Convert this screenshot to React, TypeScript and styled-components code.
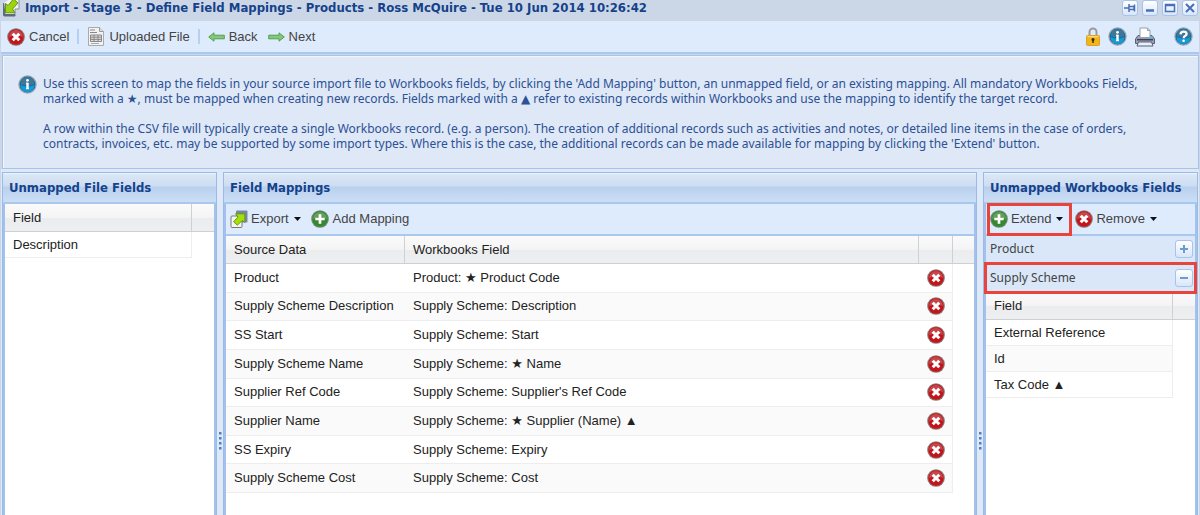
import React from "react";
import styled, { createGlobalStyle, css } from "styled-components";

const heading = `"DejaVu Sans Condensed", "DejaVu Sans", sans-serif`;
const prose = `"Noto Sans", "DejaVu Sans", sans-serif`;
const arial = `"Liberation Sans", "DejaVu Sans", sans-serif`;

const GlobalStyle = createGlobalStyle`
  * { box-sizing: border-box; }
  body { margin: 0; background: #cbd7e7; font: 13px/16px ${arial}; color: #333; }
  button { font: inherit; color: inherit; cursor: pointer; }
  h1, h2, h3, p { margin: 0; }
  svg { display: block; flex: none; }
`;

const Window = styled.div`
  display: flex;
  flex-direction: column;
  min-height: 100vh;
  padding: 0 1px;
`;

const TitleBar = styled.header`
  display: flex;
  align-items: flex-start;
  height: 21px;
  padding: 0 1px;
  gap: 5px;
`;

const Title = styled.h1`
  flex: 1;
  font: bold 13px/15px ${heading};
  color: #15428b;
  white-space: nowrap;
`;

const Tools = styled.div`
  display: flex;
  gap: 4px;
`;

const ToolButton = styled.button`
  display: grid;
  place-items: center;
  width: 16px;
  height: 16px;
  padding: 0;
  border: 1px solid #a9c4ea;
  border-radius: 3px;
  background: linear-gradient(#fff, #d8e6fa);
`;

const Toolbar = styled.div`
  display: flex;
  align-items: center;
  height: 33px;
  padding: 0 6px;
  background: #deebfd;
  border-bottom: 2px solid #a9c8ee;
`;

const PanelToolbar = styled(Toolbar)`
  height: 32px;
  padding: 0 4px;
  gap: 10px;
`;

const Button = styled.button<{ $marked?: boolean }>`
  display: flex;
  align-items: center;
  gap: 4px;
  height: 27px;
  padding: 0;
  border: 0;
  background: none;
  color: #444;
  white-space: nowrap;
  ${(p) =>
    p.$marked &&
    css`
      outline: 3px solid #e8443c;
      padding: 0 6px 0 0;
      margin-right: -4px;
    `}
`;

const NextButton = styled(Button)`
  margin-left: 10px;
`;

const CaretButton = styled(Button)`
  gap: 3px;
  > :last-child { margin-left: 2px; }
`;

const Separator = styled.span`
  width: 2px;
  height: 15px;
  margin: 0 8px;
  background: #b4d0f5;
`;

const Status = styled.div`
  display: flex;
  align-items: center;
  gap: 8px;
  margin-left: auto;
`;

const StatusButton = styled.button<{ $apart?: boolean }>`
  padding: 0;
  border: 0;
  background: none;
  margin-left: ${(p) => (p.$apart ? "11px" : "0")};
`;

const Info = styled.section`
  display: flex;
  gap: 6px;
  margin: 1px 0 0 1px;
  padding: 19px 16px 10px 15px;
  min-height: 114px;
  background: #dfe8f6;
  border: 1px solid #a9c4ea;
  box-shadow: inset 1px 1px 0 #f2f6fc;
`;

const InfoText = styled.div`
  display: grid;
  align-content: start;
  gap: 15px;
  padding-top: 1px;
  font: 12px/15px ${prose};
  color: #2c5195;
`;

const Panels = styled.main`
  flex: 1;
  display: grid;
  grid-template-columns: 215px 6px minmax(0, 1fr) 6px 215px;
  padding: 3px 1px 0 1px;
  background: #dfe8f6;
`;

const Panel = styled.section`
  display: flex;
  flex-direction: column;
  border: 1px solid #99bbe8;
  border-bottom: 0;
  background: #fff;
`;

const PanelTitle = styled.h2`
  height: 31px;
  padding: 0 6px;
  font: bold 13px/30px ${heading};
  color: #15428b;
  white-space: nowrap;
  background: linear-gradient(#f0f5fc 0, #dae6f5 2px, #cdddf2 13px, #b9d0ee 14px, #cbdef5 29px);
  border-bottom: 2px solid #a9c8ee;
`;

const PanelBody = styled.div`
  flex: 1;
  border: 0 solid #a3c1ec;
  border-width: 0 2px 0 2px;
`;

const Splitter = styled.div`
  display: flex;
  justify-content: center;
  padding-top: 260px;
`;

const Table = styled.table<{ $height?: number }>`
  width: 100%;
  height: ${(p) => (p.$height ? `${p.$height}px` : "auto")};
  border-collapse: separate;
  border-spacing: 0;
  table-layout: fixed;
  color: #222;
`;

const HeadCell = styled.th`
  height: 28px;
  padding: 0 8px;
  text-align: left;
  font-weight: normal;
  white-space: nowrap;
  background: linear-gradient(#fafafa, #f4f4f5 50%, #ebecee 51%, #eeeff0);
  border-bottom: 1px solid #d0d0d0;
  border-right: 1px solid #d0d0d0;
  &:last-child { border-right: 0; }
`;

const Row = styled.tr`
  &:nth-child(even) td:not(:last-child) { background: #fafafa; }
`;

const Cell = styled.td<{ $end?: boolean }>`
  height: 26px;
  padding: 0 8px;
  white-space: nowrap;
  border-bottom: 1px solid #ededed;
  border-right: ${(p) => (p.$end ? "1px solid #ededed" : "0")};
  &:last-child { border: 0; }
`;

const RowButton = styled.button`
  display: block;
  padding: 0;
  border: 0;
  background: none;
`;

const AccordionHead = styled.h3<{ $marked?: boolean }>`
  display: flex;
  align-items: center;
  justify-content: space-between;
  height: 28px;
  padding: 0 2px 1px 4px;
  font: 12px/16px ${prose};
  color: #444;
  background: #d9e7f8;
  border-bottom: 1px solid #99bbe8;
  ${(p) =>
    p.$marked &&
    css`
      border: 0;
      position: relative;
      outline: 3px solid #e8443c;
      outline-offset: -1px;
    `}
`;

const ExpandButton = styled(ToolButton)`
  width: 18px;
  height: 18px;
`;

const Cross = () => (
  <svg width="18" height="18" viewBox="0 0 18 18">
    <circle cx="9" cy="9" r="8.8" fill="#8d7474" />
    <circle cx="9" cy="9" r="7.7" fill="#c4141a" />
    <path d="M2 9a7 7 0 0 1 14 0q-7-3-14 0z" fill="#c9686a" opacity=".6" />
    <path d="M5.700 5.700l6.600 6.600M12.300 5.700l-6.600 6.600" stroke="#fff" strokeWidth="3" />
  </svg>
);

const Plus = () => (
  <svg width="18" height="18" viewBox="0 0 18 18">
    <circle cx="9" cy="9" r="8.8" fill="#6e8a72" />
    <circle cx="9" cy="9" r="7.7" fill="#36882f" />
    <path d="M2 9a7 7 0 0 1 14 0q-7-3-14 0z" fill="#7fae7b" opacity=".6" />
    <path d="M9 4.300v9.400M4.300 9h9.400" stroke="#fff" strokeWidth="2.700" />
  </svg>
);

const Disc = ({ children }: { children: React.ReactNode }) => (
  <svg width="19" height="19" viewBox="0 0 19 19">
    <circle cx="9.500" cy="9.500" r="9.200" fill="#98a5af" />
    <circle cx="9.500" cy="9.500" r="7.900" fill="#146ca3" />
    <path d="M2.500 10a7 7 0 0 0 14 0q-7 3-14 0z" fill="#159bd5" />
    <path d="M2.500 9a7 7 0 0 1 14 0q-7 3-14 0z" fill="#3f7796" />
    {children}
  </svg>
);

const InfoIcon = () => (
  <Disc>
    <circle cx="9.500" cy="5.300" r="1.400" fill="#fff" />
    <path d="M9.500 7.700v6.300" stroke="#fff" strokeWidth="2.400" fill="none" />
    <path d="M8 8.200h1.500M8 13.700h3" stroke="#fff" strokeWidth="1" fill="none" />
  </Disc>
);

const HelpIcon = () => (
  <Disc>
    <path d="M6.500 7.300q.2-2.700 3.100-2.700t3 2.300q0 1.300-1.600 2.100-1.300.7-1.300 2.200" stroke="#fff" strokeWidth="2.200" fill="none" />
    <circle cx="9.600" cy="13.700" r="1.300" fill="#fff" />
  </Disc>
);

const ImportIcon = () => (
  <svg width="18" height="17" viewBox="0 0 18 17">
    <path d="M2 3v11.500h11V9h4V-1H8" fill="#f2f4f7" stroke="#8791a0" />
    <path d="M1.500 3.500L3 14.500h10V16H2.500q-1 0-1-1z" fill="#5b6d78" stroke="#5b6d78" />
    <path d="M3.500 12.800V3.500l2.500 2L11.500-1 16 3l-5.500 6 2.500 3.800z" fill="#9bd30d" stroke="#5a8a0a" strokeWidth=".9" />
  </svg>
);

const ExportIcon = () => (
  <svg width="18" height="18" viewBox="0 0 18 18">
    <rect x="6" y="0.500" width="11.500" height="12" rx="1" fill="#7987a5" />
    <rect x="1" y="6" width="11" height="11.500" rx="1" fill="#f4f4f4" stroke="#777" />
    <path d="M5.500 3.800h9.300v8.700l-2.500-2-5 4.700-3.800-3.500L8 7z" fill="#a5df0b" stroke="#5f9410" strokeWidth=".9" />
  </svg>
);

const FileIcon = () => (
  <svg width="18" height="19" viewBox="0 0 18 19">
    <path d="M1.500.5h11l4 4v14h-15z" fill="#f2f2f2" stroke="#aaa" />
    <path d="M12.500.5v4h4" fill="#ddd" stroke="#999" />
    <path d="M3 3h5M3 5.500h7" stroke="#888" />
    <path d="M3.500 8h11v6.500h-11zM3.500 10.200h11M3.500 12.400h11M7 8v6.500M11 8v6.500" fill="#ddd" stroke="#888" />
    <path d="M4 16.500h8" stroke="#aaa" />
  </svg>
);

const Arrow = ({ back }: { back?: boolean }) => (
  <svg width="17" height="10" viewBox="0 0 17 10">
    <path
      d={back ? "M.7 5L6 .8v2.400h10.300v3.600H6v2.400z" : "M16.300 5L11 .8v2.400H.7v3.600H11v2.400z"}
      fill="#86c77c"
      stroke="#4a9a48"
      strokeWidth=".9"
    />
  </svg>
);

const Caret = () => (
  <svg width="7" height="4" viewBox="0 0 7 4">
    <path d="M0 0h7L3.500 4z" fill="#111" />
  </svg>
);

const LockIcon = () => (
  <svg width="14" height="19" viewBox="0 0 14 19">
    <path d="M3.500 9V5a3.500 3.500 0 0 1 7 0v4" fill="none" stroke="#9b9b9b" strokeWidth="2" />
    <rect x=".5" y="8.500" width="13" height="10" rx="1" fill="#f3b51b" stroke="#d9a02a" />
    <path d="M1.500 9.700h11" stroke="#ffe48a" />
    <circle cx="7" cy="12.500" r="1.500" fill="#3b2b06" />
    <path d="M7 12v4" stroke="#3b2b06" strokeWidth="1.500" />
  </svg>
);

const PrinterIcon = () => (
  <svg width="20" height="20" viewBox="0 0 20 20">
    <path d="M3 8.500h14l2.500 3.500v4.500h-19V12z" fill="#9aa0b8" stroke="#5a5f78" />
    <path d="M5 10.500V1h7.500L15 3.500v7z" fill="#fff" stroke="#9a9eb0" />
    <path d="M12.500 1v2.500H15" fill="none" stroke="#9a9eb0" />
    <path d="M2 12.700h16" stroke="#3d4154" strokeWidth="1.500" />
    <path d="M3.500 15h13l1.500 4H2z" fill="#e8f0f8" stroke="#5a6078" />
    <circle cx="16.800" cy="10.500" r="1.200" fill="#35c5ee" />
  </svg>
);

const Glyph = ({ d, width = 2, soft }: { d: string; width?: number; soft?: boolean }) => (
  <svg width="12" height="12" viewBox="0 0 12 12">
    <path d={d} fill="none" stroke={soft ? "#6f9bcb" : "#4a6fb4"} strokeWidth={width} />
  </svg>
);

const Dots = () => (
  <svg width="3" height="18" viewBox="0 0 3 18">
    {[0, 5, 10, 15].map((y) => (
      <rect key={y} y={y} width="2.500" height="2.500" fill="#4f7fc4" />
    ))}
  </svg>
);

const mappings = [
  ["Product", "Product: ★ Product Code"],
  ["Supply Scheme Description", "Supply Scheme: Description"],
  ["SS Start", "Supply Scheme: Start"],
  ["Supply Scheme Name", "Supply Scheme: ★ Name"],
  ["Supplier Ref Code", "Supply Scheme: Supplier's Ref Code"],
  ["Supplier Name", "Supply Scheme: ★ Supplier (Name) ▲"],
  ["SS Expiry", "Supply Scheme: Expiry"],
  ["Supply Scheme Cost", "Supply Scheme: Cost"],
];

const Column = styled.col<{ $width?: number }>`
  width: ${(p) => (p.$width ? `${p.$width}px` : "auto")};
`;

const FieldList = ({ fields }: { fields: string[] }) => (
  <Table>
    <colgroup>
      <Column />
      <Column $width={22} />
    </colgroup>
    <thead>
      <tr>
        <HeadCell>Field</HeadCell>
        <HeadCell />
      </tr>
    </thead>
    <tbody>
      {fields.map((field) => (
        <Row key={field}>
          <Cell $end>{field}</Cell>
          <Cell />
        </Row>
      ))}
    </tbody>
  </Table>
);

export default function App() {
  return (
    <Window>
      <GlobalStyle />
      <TitleBar>
        <ImportIcon />
        <Title>Import - Stage 3 - Define Field Mappings - Products - Ross McQuire - Tue 10 Jun 2014 10:26:42</Title>
        <Tools>
          <ToolButton aria-label="Pin"><Glyph d="M0 6h5M5 2v8M5 4.500h5v3H5M10.500 2.500v7" width={1.5} /></ToolButton>
          <ToolButton aria-label="Minimize"><Glyph d="M2 8.500h8" width={2.5} /></ToolButton>
          <ToolButton aria-label="Maximize"><Glyph d="M1.500 2.500h9v7h-9zM1.500 3.500h9" width={1.5} /></ToolButton>
          <ToolButton aria-label="Close"><Glyph d="M2 2l8 8M10 2l-8 8" /></ToolButton>
        </Tools>
      </TitleBar>
      <Toolbar>
        <Button><Cross />Cancel</Button>
        <Separator />
        <Button><FileIcon />Uploaded File</Button>
        <Separator />
        <Button><Arrow back />Back</Button>
        <NextButton><Arrow />Next</NextButton>
        <Status>
          <StatusButton aria-label="Lock"><LockIcon /></StatusButton>
          <StatusButton aria-label="Information"><InfoIcon /></StatusButton>
          <StatusButton aria-label="Print"><PrinterIcon /></StatusButton>
          <StatusButton aria-label="Help" $apart><HelpIcon /></StatusButton>
        </Status>
      </Toolbar>
      <Info>
        <InfoIcon />
        <InfoText>
          <p>
            Use this screen to map the fields in your source import file to Workbooks fields, by clicking the 'Add Mapping' button, an unmapped field, or an existing mapping. All mandatory Workbooks Fields, marked with a ★, must be mapped when creating new records. Fields marked with a ▲ refer to existing records within Workbooks and use the mapping to identify the target record.
          </p>
          <p>
            A row within the CSV file will typically create a single Workbooks record. (e.g. a person). The creation of additional records such as activities and notes, or detailed line items in the case of orders, contracts, invoices, etc. may be supported by some import types. Where this is the case, the additional records can be made available for mapping by clicking the 'Extend' button.
          </p>
        </InfoText>
      </Info>
      <Panels>
        <Panel>
          <PanelTitle>Unmapped File Fields</PanelTitle>
          <PanelBody><FieldList fields={["Description"]} /></PanelBody>
        </Panel>
        <Splitter><Dots /></Splitter>
        <Panel>
          <PanelTitle>Field Mappings</PanelTitle>
          <PanelBody>
            <PanelToolbar>
              <CaretButton><ExportIcon />Export<Caret /></CaretButton>
              <Button><Plus />Add Mapping</Button>
            </PanelToolbar>
            <Table $height={257}>
              <colgroup>
                <Column $width={179} />
                <Column />
                <Column $width={34} />
                <Column $width={21} />
              </colgroup>
              <thead>
                <tr>
                  <HeadCell>Source Data</HeadCell>
                  <HeadCell>Workbooks Field</HeadCell>
                  <HeadCell />
                  <HeadCell />
                </tr>
              </thead>
              <tbody>
                {mappings.map(([source, target]) => (
                  <Row key={source}>
                    <Cell>{source}</Cell>
                    <Cell>{target}</Cell>
                    <Cell $end>
                      <RowButton aria-label={`Remove ${source}`}><Cross /></RowButton>
                    </Cell>
                    <Cell />
                  </Row>
                ))}
              </tbody>
            </Table>
          </PanelBody>
        </Panel>
        <Splitter><Dots /></Splitter>
        <Panel>
          <PanelTitle>Unmapped Workbooks Fields</PanelTitle>
          <PanelBody>
            <PanelToolbar>
              <CaretButton $marked><Plus />Extend<Caret /></CaretButton>
              <CaretButton><Cross />Remove<Caret /></CaretButton>
            </PanelToolbar>
            <AccordionHead>
              Product
              <ExpandButton aria-label="Expand Product"><Glyph soft d="M6 2v8M2 6h8" /></ExpandButton>
            </AccordionHead>
            <AccordionHead $marked>
              Supply Scheme
              <ExpandButton aria-label="Collapse Supply Scheme"><Glyph soft d="M2 6h8" /></ExpandButton>
            </AccordionHead>
            <FieldList fields={["External Reference", "Id", "Tax Code ▲"]} />
          </PanelBody>
        </Panel>
      </Panels>
    </Window>
  );
}
